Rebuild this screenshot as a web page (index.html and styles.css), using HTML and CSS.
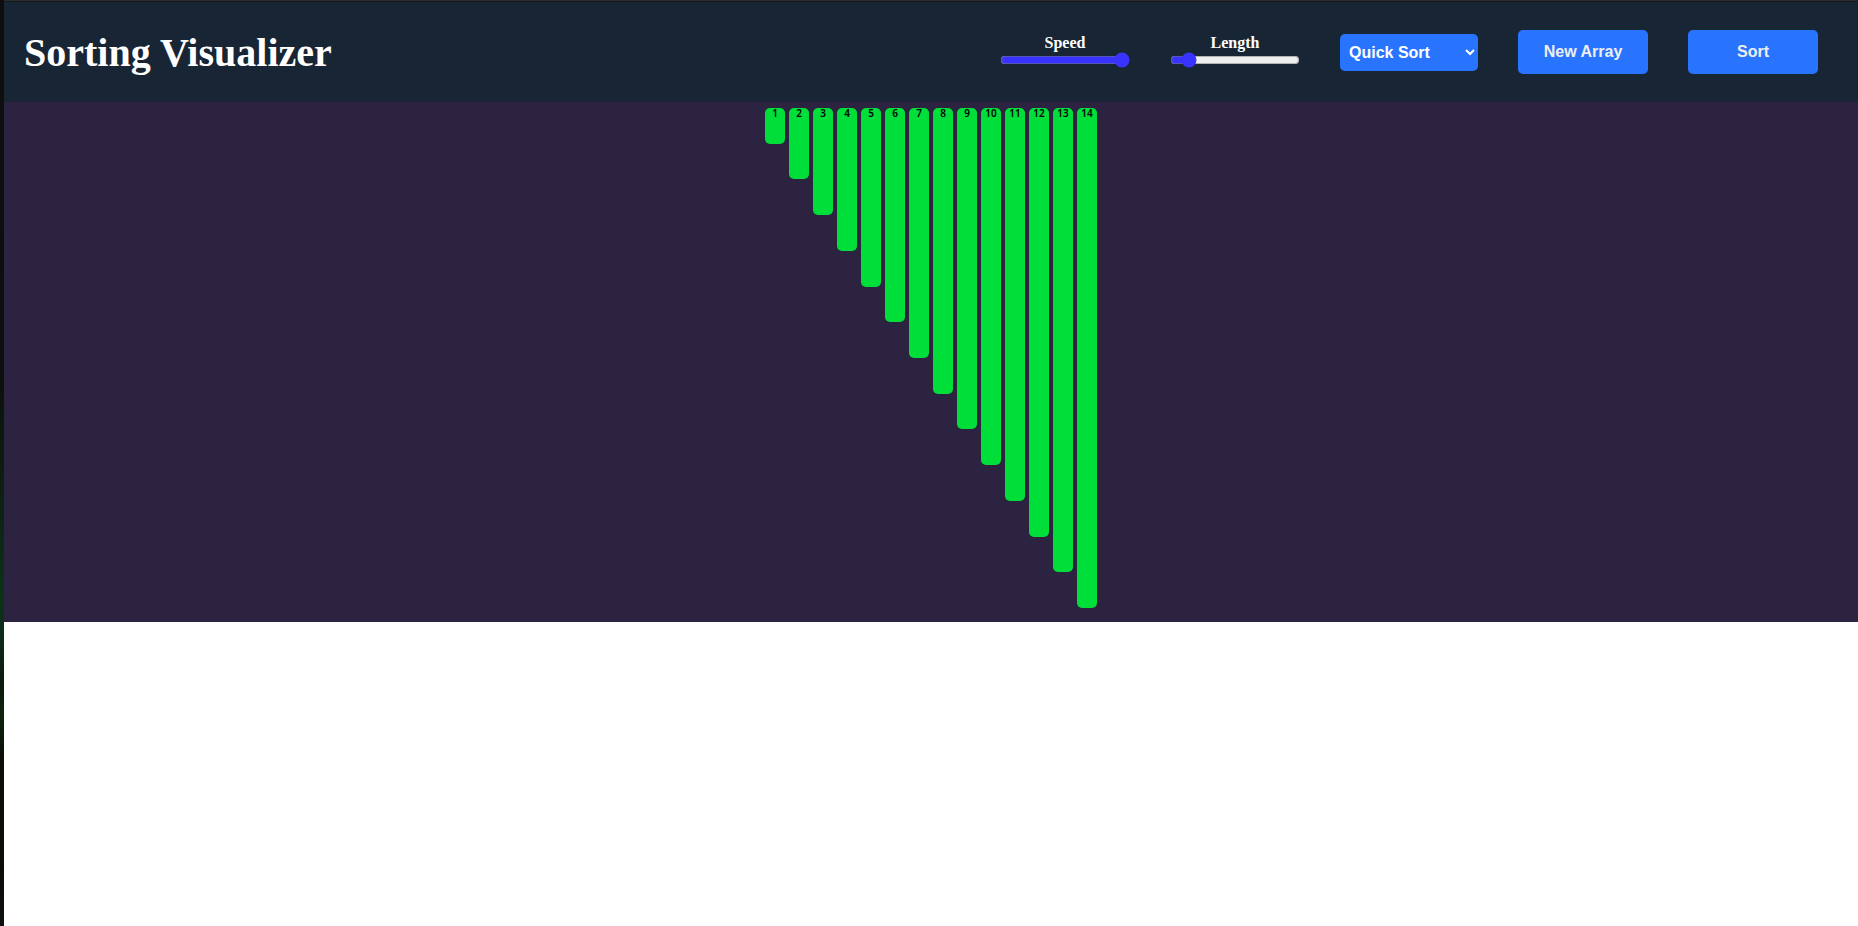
FILE: index.html
```html
<!DOCTYPE html>
<html lang="en">
<head>
<meta charset="utf-8">
<title>Sorting Visualizer</title>
<link rel="stylesheet" href="styles.css">
</head>
<body>
<div class="page">
  <header class="navbar">
    <h1 class="title">Sorting Visualizer</h1>
    <div class="controls">
      <div class="slider">
        <label for="speed">Speed</label>
        <input type="range" id="speed" min="1" max="100" value="100">
      </div>
      <div class="slider">
        <label for="length">Length</label>
        <input type="range" id="length" min="5" max="100" value="14">
      </div>
      <select class="algorithm" aria-label="Algorithm">
        <option selected>Quick Sort</option>
        <option>Merge Sort</option>
        <option>Bubble Sort</option>
        <option>Insertion Sort</option>
        <option>Selection Sort</option>
      </select>
      <button class="button" type="button">New Array</button>
      <button class="button" type="button">Sort</button>
    </div>
  </header>
  <main class="bars">
    <div class="bar" style="height:36px">1</div>
    <div class="bar" style="height:71px">2</div>
    <div class="bar" style="height:107px">3</div>
    <div class="bar" style="height:143px">4</div>
    <div class="bar" style="height:179px">5</div>
    <div class="bar" style="height:214px">6</div>
    <div class="bar" style="height:250px">7</div>
    <div class="bar" style="height:286px">8</div>
    <div class="bar" style="height:321px">9</div>
    <div class="bar" style="height:357px">10</div>
    <div class="bar" style="height:393px">11</div>
    <div class="bar" style="height:429px">12</div>
    <div class="bar" style="height:464px">13</div>
    <div class="bar" style="height:500px">14</div>
  </main>
</div>
</body>
</html>
```
FILE: styles.css
```css
* {
  box-sizing: border-box;
}

body {
  margin: 0;
  min-height: 100vh;
  padding-left: 4px;
  font-family: "Liberation Serif", serif;
  background: linear-gradient(#0e0e0e 0%, #0c0f0d 40%, #0d2214 55%, #0c3318 65%, #0e2c1c 68%, #0b1a0e 74%, #0c240c 77%, #0b0d08 82%, #0c0b08 94%, #0c120f 100%);
}

.page {
  min-height: 100vh;
  border-top: 1px solid #2c2c2c;
  background: #fff;
}

.navbar {
  display: flex;
  align-items: center;
  justify-content: space-between;
  min-height: 101px;
  padding: 0 40px 0 20px;
  border-top: 1px solid #171a1d;
  color: #fff;
  background: #182534;
}

.title {
  margin: 0;
  font-size: 40px;
  font-weight: bold;
}

.controls {
  display: flex;
  align-items: center;
  gap: 40px;
}

.slider {
  display: flex;
  flex-direction: column;
  align-items: center;
  width: 130px;
  padding-bottom: 2px;
  font-size: 16px;
  font-weight: bold;
}

.slider input {
  width: 100%;
  height: 16px;
  margin: 0;
  accent-color: #3833ff;
}

.algorithm,
.button {
  border: 0;
  border-radius: 5px;
  font-family: "Liberation Sans", Arial, sans-serif;
  font-size: 16px;
  font-weight: bold;
  background-color: #2874ff;
}

.algorithm {
  width: 138px;
  height: 37px;
  padding: 0 5px;
  color: #fff;
}

.button {
  width: 130px;
  height: 44px;
  padding: 0 0 1px;
  color: #eee;
}

.bars {
  display: flex;
  justify-content: center;
  align-items: flex-start;
  gap: 4px;
  min-height: 520px;
  padding-top: 6px;
  background: #2c2340;
}

.bar {
  width: 20px;
  border-radius: 5px;
  font-family: "Noto Sans", sans-serif;
  font-size: 10px;
  font-weight: 600;
  line-height: 11px;
  text-align: center;
  color: #000;
  background: #00de3a;
}
```
